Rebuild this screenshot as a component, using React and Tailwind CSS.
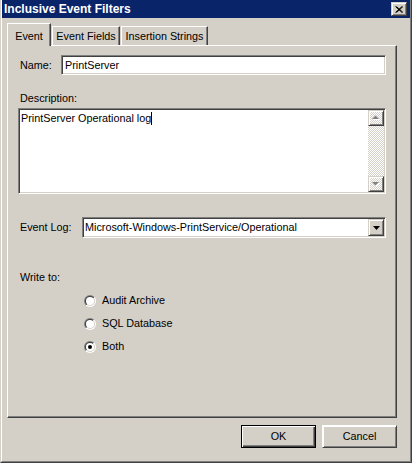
import React from "react";

// classic 3D edges
const sunken =
  "border border-t-[#808080] border-l-[#808080] border-r-white border-b-white shadow-[inset_1px_1px_0_#404040,inset_-1px_-1px_0_#d4d0c8]";
const raised =
  "border border-t-[#d4d0c8] border-l-[#d4d0c8] border-r-[#404040] border-b-[#404040] shadow-[inset_1px_1px_0_#fff,inset_-1px_-1px_0_#808080]";

function Radio({ checked, label }) {
  return (
    <div className="flex items-center h-[23px]">
      <svg width="12" height="12" viewBox="0 0 12 12" className="ml-[76px]">
        <defs>
          <linearGradient id="radioOuter" x1="0" y1="0" x2="1" y2="1">
            <stop offset="50%" stopColor="#808080" />
            <stop offset="50%" stopColor="#ffffff" />
          </linearGradient>
          <linearGradient id="radioInner" x1="0" y1="0" x2="1" y2="1">
            <stop offset="50%" stopColor="#404040" />
            <stop offset="50%" stopColor="#d4d0c8" />
          </linearGradient>
        </defs>
        <circle cx="6" cy="6" r="6" fill="url(#radioOuter)" />
        <circle cx="6" cy="6" r="5" fill="url(#radioInner)" />
        <circle cx="6" cy="6" r="4" fill="#ffffff" />
        {checked && <circle cx="6" cy="6" r="2" fill="#000000" />}
      </svg>
      <span className="ml-[6px]">{label}</span>
    </div>
  );
}

function ScrollButton({ down }) {
  return (
    <div className={`w-[16px] h-[16px] flex items-center justify-center ${raised}`}>
      <svg width="9" height="6" viewBox="0 0 9 6">
        {down ? (
          <>
            <polygon points="1,2 8,2 4.5,5.5" fill="#ffffff" />
            <polygon points="0,1 7,1 3.5,4.5" fill="#808080" />
          </>
        ) : (
          <>
            <polygon points="1,5 8,5 4.5,1.5" fill="#ffffff" />
            <polygon points="0,4 7,4 3.5,0.5" fill="#808080" />
          </>
        )}
      </svg>
    </div>
  );
}

export default function App() {
  return (
    <div className="w-[412px] h-[463px] bg-[#d4d0c8] border-l border-l-[#d4d0c8] border-r border-b border-[#404040] font-['Liberation_Sans',Arial,sans-serif] text-[10.8px] text-black leading-[13px]">
      <div className="h-full border-l border-l-white border-r border-b border-r-[#808080] border-b-[#808080] flex flex-col">
        {/* title bar */}
        <div className="h-[18px] bg-[#0a246a] flex items-center justify-between">
          <span className="pl-[2px] text-white font-bold text-[12px]">Inclusive Event Filters</span>
          <div className={`w-[16px] h-[14px] mr-[3px] bg-[#d4d0c8] flex items-center justify-center ${raised}`}>
            <svg width="8" height="7" viewBox="0 0 8 7">
              <path d="M0.5 0.5 L7 6.5 M1.5 0.5 L8 6.5 M7 0.5 L0.5 6.5 M8 0.5 L1.5 6.5" stroke="#000" strokeWidth="1" />
            </svg>
          </div>
        </div>

        <div className="pl-[5px] pt-[5px] flex flex-col">
          {/* tabs */}
          <div className="flex items-end h-[22px]">
            <div className="relative z-10 h-[23px] -mb-px w-[44px] bg-[#d4d0c8] border-t border-l border-t-white border-l-white border-r border-r-[#404040] shadow-[inset_-1px_0_0_#808080] flex items-start justify-center pt-[6px]">
              Event
            </div>
            <div className="h-[19px] ml-px w-[68px] border-t border-l border-t-white border-l-white border-r border-r-[#404040] shadow-[inset_-1px_0_0_#808080] flex items-center justify-center">
              Event Fields
            </div>
            <div className="h-[19px] ml-px w-[87px] border-t border-l border-t-white border-l-white border-r border-r-[#404040] shadow-[inset_-1px_0_0_#808080] flex items-center justify-center">
              Insertion Strings
            </div>
          </div>

          {/* tab panel */}
          <div className="w-[390px] h-[373px] border-t border-l border-t-white border-l-white border-r border-b border-r-[#404040] border-b-[#404040] shadow-[inset_-1px_-1px_0_#808080] flex flex-col">
            <div className="flex items-center mt-[9px] h-[20px]">
              <span className="ml-[12px] w-[41px]">Name:</span>
              <div className={`w-[325px] h-[20px] bg-white flex items-center pl-[3px] ${sunken}`}>PrintServer</div>
            </div>

            <div className="mt-[17px] ml-[12px] h-[13px]">Description:</div>
            <div className={`mt-[3px] ml-[10px] w-[368px] h-[86px] bg-white flex ${sunken}`}>
              <div className="flex-1 pl-[2px] pt-[3px] flex items-start">
                <span>PrintServer Operational log</span>
                <span className="w-px h-[13px] bg-black" />
              </div>
              <div className="w-[16px] mt-px mb-px mr-px flex flex-col bg-[repeating-conic-gradient(#d4d0c8_0_25%,#ffffff_0_50%)] bg-[length:2px_2px]">
                <ScrollButton />
                <div className="flex-1" />
                <ScrollButton down />
              </div>
            </div>

            <div className="flex items-center mt-[23px] h-[21px]">
              <span className="ml-[12px] w-[62px]">Event Log:</span>
              <div className={`w-[304px] h-[21px] bg-white flex items-center ${sunken}`}>
                <span className="flex-1 pl-[2px]">Microsoft-Windows-PrintService/Operational</span>
                <div className={`w-[16px] h-[17px] mr-px bg-[#d4d0c8] flex items-center justify-center ${raised}`}>
                  <svg width="7" height="4" viewBox="0 0 7 4">
                    <polygon points="0,0 7,0 3.5,4" fill="#000" />
                  </svg>
                </div>
              </div>
            </div>

            <div className="mt-[33px] ml-[12px] h-[13px]">Write to:</div>
            <div className="mt-[5px] flex flex-col">
              <Radio label="Audit Archive" />
              <Radio label="SQL Database" />
              <Radio checked label="Both" />
            </div>
          </div>

          {/* buttons */}
          <div className="w-[390px] mt-[7px] flex justify-end gap-[6px]">
            <button className="w-[75px] h-[23px] bg-[#d4d0c8] border border-black shadow-[inset_1px_1px_0_#fff,inset_-1px_-1px_0_#404040,inset_-2px_-2px_0_#808080] text-[10.8px]">
              OK
            </button>
            <button className={`w-[75px] h-[23px] bg-[#d4d0c8] text-[10.8px] border-t-white border-l-white ${raised}`}>
              Cancel
            </button>
          </div>
        </div>
      </div>
    </div>
  );
}
